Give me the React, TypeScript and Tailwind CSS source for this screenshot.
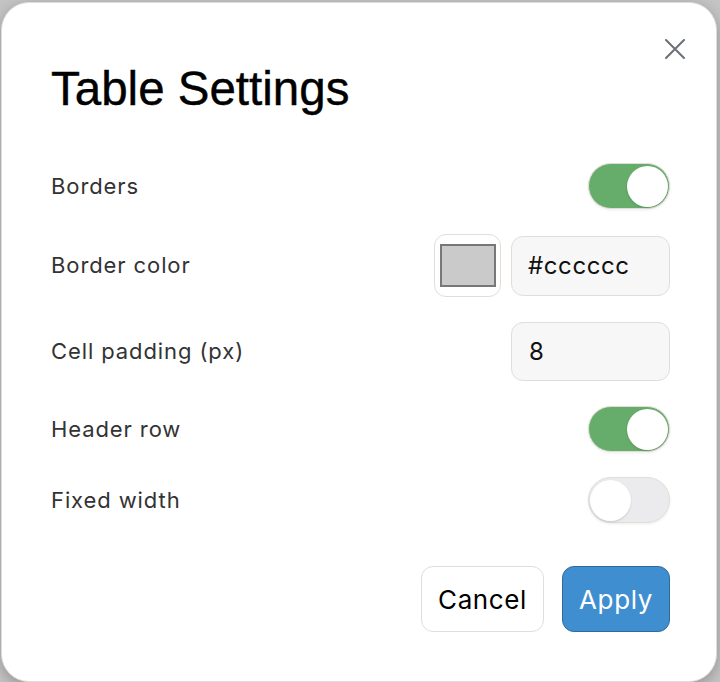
import React from "react";

function Toggle({ on }: { on: boolean }) {
  return (
    <div
      className={
        on
          ? "relative w-[82px] h-[46px] rounded-full bg-[#66ac6a] border border-[#e3ddd8] shadow-[0_1px_3px_rgba(0,0,0,0.08)] flex items-center justify-end pr-[1px]"
          : "relative w-[82px] h-[46px] rounded-full bg-[#ebebee] border border-[#e3ddd8] shadow-[0_1px_3px_rgba(0,0,0,0.08)] flex items-center justify-start pl-[1px]"
      }
    >
      <div className="w-[41px] h-[41px] rounded-full bg-white shadow-[0_1px_2px_rgba(0,0,0,0.15)]" />
    </div>
  );
}

export default function App() {
  const label = "text-[22px] text-[#333333] tracking-[0.9px]";
  return (
    <div className="w-[720px] h-[682px] bg-[#c4c4c4] overflow-hidden" style={{ fontFamily: "Inter, 'Noto Sans', sans-serif" }}>
      <div className="relative ml-[1px] mt-[2px] w-[716px] h-[680px] bg-white rounded-[28px] border border-[#e2ddd8] shadow-[0_4px_14px_rgba(0,0,0,0.25)] pt-[59px] pl-[49px] pr-[46px] pb-[46px] flex flex-col">
        <button className="absolute top-[36px] right-[31px] w-[20px] h-[20px]" aria-label="Close">
          <svg width="20" height="20" viewBox="0 0 20 20">
            <path d="M1 1 L19 19 M19 1 L1 19" stroke="#6b7078" strokeWidth="2" strokeLinecap="round" />
          </svg>
        </button>
        <h2
          className="text-[47.5px] leading-[53px] text-black font-normal [-webkit-text-stroke:0.4px_black]"
          style={{ fontFamily: "'Liberation Sans', Arial, sans-serif" }}
        >
          Table Settings
        </h2>
        <div className="mt-[48px] flex flex-col gap-[25px]">
          <div className="h-[46px] flex items-center justify-between">
            <span className={label}>Borders</span>
            <Toggle on={true} />
          </div>
          <div className="h-[63px] flex items-center justify-between">
            <span className={label}>Border color</span>
            <div className="flex items-center gap-[10px]">
              <div className="w-[67px] h-[63px] rounded-[12px] border border-[#e3ddd8] bg-white flex items-center justify-center pl-[1px]">
                <div className="w-[56px] h-[43px] bg-[#cacaca] border-2 border-[#777777]" />
              </div>
              <div className="w-[159px] h-[60px] rounded-[12px] border border-[#e3ddd8] bg-[#f7f7f7] flex items-center pl-[16px] text-[24px] tracking-[0.6px] text-[#111111]">
                #cccccc
              </div>
            </div>
          </div>
          <div className="h-[59px] flex items-center justify-between">
            <span className={label}>Cell padding (px)</span>
            <div className="w-[159px] h-[59px] rounded-[12px] border border-[#e3ddd8] bg-[#f7f7f7] flex items-center pl-[17px] text-[24px] text-[#111111]">
              8
            </div>
          </div>
          <div className="h-[46px] flex items-center justify-between">
            <span className={label}>Header row</span>
            <Toggle on={true} />
          </div>
          <div className="h-[46px] flex items-center justify-between">
            <span className={label}>Fixed width</span>
            <Toggle on={false} />
          </div>
        </div>
        <div className="mt-[43px] flex justify-end gap-[18px]">
          <button className="w-[123px] h-[66px] rounded-[12px] border border-[#e3ddd8] bg-white text-[26px] tracking-[0.6px] text-black">
            Cancel
          </button>
          <button className="w-[108px] h-[66px] rounded-[12px] border border-[#2f6a9c] bg-[#3f8fd0] text-[26px] tracking-[0.6px] text-white">
            Apply
          </button>
        </div>
      </div>
    </div>
  );
}
